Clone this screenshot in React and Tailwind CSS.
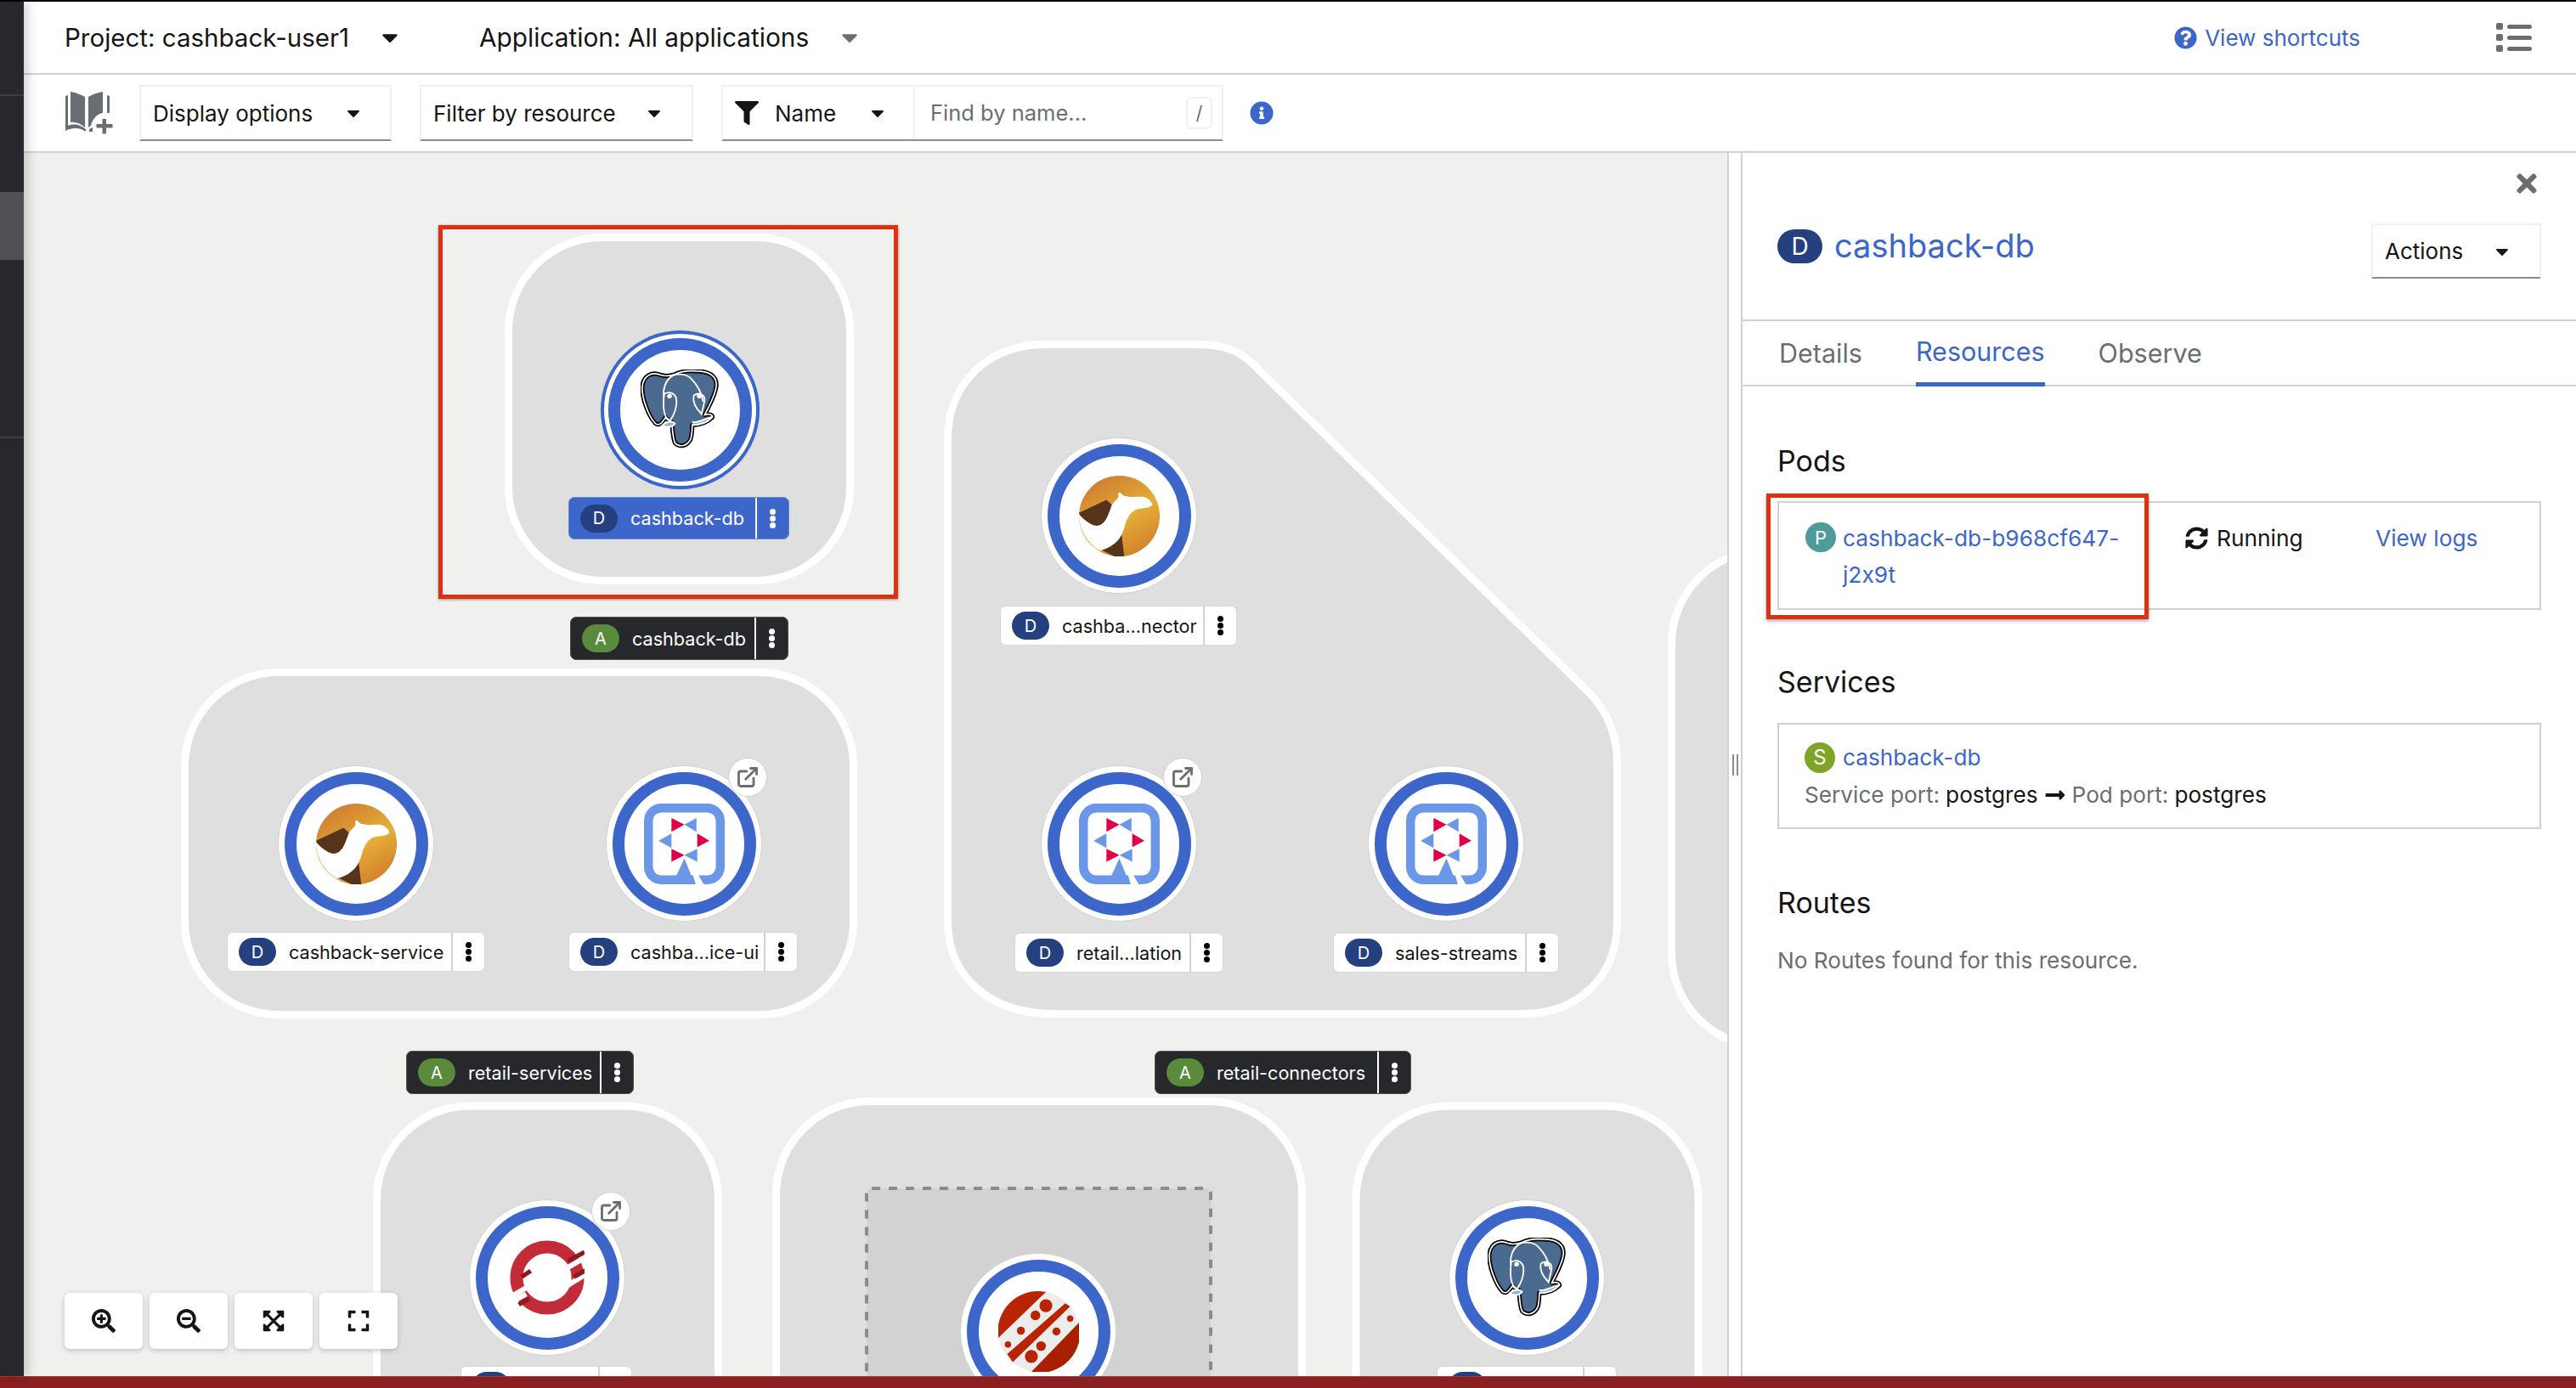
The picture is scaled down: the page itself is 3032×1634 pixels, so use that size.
import { ExternalLink } from "lucide-react";
import {
  FaCaretDown,
  FaExpand,
  FaExpandArrowsAlt,
  FaFilter,
  FaInfoCircle,
  FaLongArrowAltRight,
  FaQuestionCircle,
  FaSearchMinus,
  FaSearchPlus,
  FaSyncAlt,
  FaTimes,
} from "react-icons/fa";

// canvas origin in page coordinates, the data below is in page coordinates
const OX = 28;
const OY = 180;

const nodes = [
  { x: 800, y: 482, logo: "pg", selected: true },
  { x: 419, y: 993, logo: "camel" },
  { x: 805, y: 993, logo: "quarkus", link: true },
  { x: 1317, y: 607, logo: "camel" },
  { x: 1317, y: 993, logo: "quarkus", link: true },
  { x: 1702, y: 993, logo: "quarkus" },
  { x: 644, y: 1504, logo: "openshift", link: true },
  { x: 1222, y: 1567, logo: "amq" },
  { x: 1797, y: 1504, logo: "pg" },
];

const labels = [
  { x: 669, y: 585, w: 260, h: 50, text: "cashback-db", kind: "selected" },
  { x: 671, y: 726, w: 257, h: 51, text: "cashback-db", kind: "app" },
  { x: 267, y: 1097, w: 304, h: 47, text: "cashback-service" },
  { x: 669, y: 1097, w: 270, h: 47, text: "cashba...ice-ui" },
  { x: 1177, y: 713, w: 279, h: 47, text: "cashba...nector" },
  { x: 1194, y: 1098, w: 246, h: 47, text: "retail...lation" },
  { x: 1569, y: 1098, w: 266, h: 47, text: "sales-streams" },
  { x: 478, y: 1237, w: 268, h: 51, text: "retail-services", kind: "app" },
  { x: 1359, y: 1237, w: 302, h: 51, text: "retail-connectors", kind: "app" },
  { x: 542, y: 1608, w: 202, h: 47, text: "" },
  { x: 1691, y: 1608, w: 212, h: 47, text: "" },
];

function Elephant() {
  const outer =
    "M26 6 C14 1 3 7 2 22 C2 38 11 60 19 68 C24 72 28 66 32 60 L33 62 C35 64 38 65 40 66 C41 78 41 86 44 93 C50 99 60 97 64 88 C66 82 66 76 66 70 C74 70 84 68 92 60 C92 57 88 55 82 57 C88 44 96 32 97 19 C97 6 86 1 72 1 C60 0 52 1 44 5 C38 7 32 8 26 6 Z";
  return (
    <svg viewBox="0 0 100 100" className="w-[92px] h-[94px]">
      <path d={outer} fill="#4a6a90" stroke="#000" strokeWidth="5.5" strokeLinejoin="round" />
      <path d={outer} fill="none" stroke="#fff" strokeWidth="1.8" />
      <g fill="none" stroke="#fff" strokeWidth="2">
        <path d="M30 34 C28 24 32 14 38 9 C46 3 58 4 64 10 C72 18 78 28 80 40" />
        <path d="M30 30 C38 26 46 30 46 40 C46 50 42 58 38 64 C30 62 28 50 30 30" />
        <path d="M68 32 C74 28 82 30 82 38 L78 56 C72 50 66 42 68 32" />
        <path d="M28 70 C32 66 40 64 44 68 C42 72 34 74 28 70 Z" fill="#8fb0d0" />
        <path d="M66 66 C72 68 82 62 90 60 C88 66 76 70 66 70" fill="#8fb0d0" />
      </g>
      <circle cx="37" cy="33" r="3" fill="#fff" />
      <circle cx="75" cy="33" r="3" fill="#fff" />
    </svg>
  );
}

function Camel() {
  return (
    <svg viewBox="0 0 100 100" className="w-[95px] h-[95px]">
      <defs>
        <linearGradient id="camelFill" x1="0.2" y1="0" x2="0.8" y2="1">
          <stop offset="0" stopColor="#cf7a30" />
          <stop offset="0.55" stopColor="#e4ae38" />
          <stop offset="1" stopColor="#d17a2b" />
        </linearGradient>
      </defs>
      <circle cx="50" cy="50" r="50" fill="url(#camelFill)" />
      <path d="M0 46 L34 30 L52 46 L30 66 L6 60 Z" fill="#55341a" />
      <path d="M28 92 L52 66 L56 100 L44 100 Z" fill="#55341a" />
      <path
        d="M0 48 C6 54 14 62 22 62 C32 62 36 50 40 38 C42 32 48 30 49 26 C48 22 49 20 51 21 C53 22 54 25 56 25 C64 27 72 26 80 26 C86 28 90 32 91 36 C88 40 80 40 74 41 C66 43 62 48 58 58 C56 66 54 72 50 78 C44 86 36 90 26 93 C10 84 0 66 0 48 Z"
        fill="#fff"
      />
    </svg>
  );
}

function Quarkus() {
  return (
    <svg viewBox="0 0 100 100" className="w-[95px] h-[95px]">
      <rect x="5.5" y="5.5" width="89" height="89" rx="16" fill="none" stroke="#6a97e8" strokeWidth="11" />
      <polygon points="60,86 66,86 74,100 64,100" fill="#fff" />
      <polygon points="50,68 37,96 37,100 63,100" fill="#6a97e8" />
      <polygon points="34,18 34,35 50,26" fill="#df0046" />
      <polygon points="65,18 65,35 50,26" fill="#6a97e8" />
      <polygon points="34,37 34,55 18,46" fill="#6a97e8" />
      <polygon points="66,37 66,54 81,46" fill="#df0046" />
      <polygon points="34,56 34,72 50,64" fill="#df0046" />
      <polygon points="66,56 66,72 50,64" fill="#6a97e8" />
    </svg>
  );
}

function OpenShift() {
  return (
    <svg viewBox="-50 -50 100 100" className="w-[88px] h-[88px]">
      <circle r="41" fill="none" stroke="#c22b37" strokeWidth="17" />
      <g fill="none" strokeWidth="7">
        <path d="M20 -9 L56 -30" stroke="#fff" />
        <path d="M28 -22 L50 -34" stroke="#8e1a24" strokeWidth="6" />
        <path d="M28 10 L54 -6" stroke="#fff" />
        <path d="M36 -1 L52 -10" stroke="#8e1a24" strokeWidth="6" />
        <path d="M-20 9 L-56 30" stroke="#fff" />
        <path d="M-28 22 L-50 34" stroke="#fff" />
        <path d="M-34 -1 L-22 -9" stroke="#8e1a24" strokeWidth="6" />
        <path d="M-38 36 L-24 28" stroke="#8e1a24" strokeWidth="6" />
      </g>
    </svg>
  );
}

function Amq() {
  const dots = [
    [59, 18, 8],
    [46, 30, 6],
    [28, 49, 5],
    [12, 66, 4],
    [89, 34, 4],
    [72, 50, 5],
    [53, 68, 6],
    [41, 81, 8],
  ];
  return (
    <svg viewBox="0 0 100 100" className="w-[95px] h-[95px]">
      <circle cx="50" cy="50" r="50" fill="#ececec" />
      <path d="M59 1 A50 50 0 0 0 0 58 Z" fill="#b92500" />
      <path d="M100 39 A50 50 0 0 1 41 100 Z" fill="#a82000" />
      <polygon points="83,15 89,19 18,88 11,78" fill="#b92500" />
      {dots.map(([cx, cy, r]) => (
        <circle key={`${cx}-${cy}`} cx={cx} cy={cy} r={r} fill="#b92500" />
      ))}
    </svg>
  );
}

const logos = {
  pg: Elephant,
  camel: Camel,
  quarkus: Quarkus,
  openshift: OpenShift,
  amq: Amq,
};

function Node({ node }) {
  const Logo = logos[node.logo];
  return (
    <div
      className={
        node.selected
          ? "absolute flex size-[187px] items-center justify-center rounded-full border-[4px] border-[#3c66c9] bg-white"
          : "absolute flex size-[184px] items-center justify-center rounded-full border border-[#d2d2d2] bg-white"
      }
      style={{ left: node.x - OX - (node.selected ? 93.5 : 92), top: node.y - OY - (node.selected ? 93.5 : 92) }}
    >
      <div className="flex size-[169px] items-center justify-center rounded-full border-[14px] border-[#3c66c9] bg-white">
        <Logo />
      </div>
      {node.link && (
        <div className="absolute left-[143px] top-[-10px] flex size-[46px] items-center justify-center rounded-full border border-[#d2d2d2] bg-white text-[#6a6e73]">
          <ExternalLink size={28} strokeWidth={2.4} />
        </div>
      )}
    </div>
  );
}

function Kebab({ color }) {
  return (
    <div className="flex w-[37px] flex-col items-center gap-[1px]">
      <span className={`size-[7px] rounded-full ${color}`} />
      <span className={`size-[7px] rounded-full ${color}`} />
      <span className={`size-[7px] rounded-full ${color}`} />
    </div>
  );
}

function Label({ label }) {
  const box =
    label.kind === "app"
      ? "bg-[#26282c] text-white border-[#4f5155]"
      : label.kind === "selected"
        ? "bg-[#3c66c9] text-white border-[#6b8ad6]"
        : "bg-white text-[#151515] border-[#d8d8d8]";
  const badge = label.kind === "app" ? "bg-[#5a8a3c]" : "bg-[#24407f]";
  const line = label.kind === "app" || label.kind === "selected" ? "border-white" : "border-[#d2d2d2]";
  const dot = label.kind === "app" || label.kind === "selected" ? "bg-white" : "bg-black";
  return (
    <div
      className={`absolute flex items-center rounded-[7px] border-[1.5px] ${box}`}
      style={{ left: label.x - OX, top: label.y - OY, width: label.w, height: label.h }}
    >
      <span className={`ml-[13px] flex h-[33px] w-[44px] items-center justify-center rounded-full text-[20px] text-white ${badge}`}>
        {label.text && (label.kind === "app" ? "A" : "D")}
      </span>
      <span className="ml-[15px] mt-[2px] flex-1 whitespace-nowrap text-[21.6px] leading-none">{label.text}</span>
      <span className={`h-full border-l-[2px] ${line}`} />
      <Kebab color={dot} />
    </div>
  );
}

function Hulls() {
  return (
    <svg viewBox={`${OX} ${OY} 2005 1440`} className="absolute inset-0 h-[1440px] w-[2005px]">
      <g fill="#dfdfdf" stroke="#fff" strokeWidth="9">
        <rect x="598.5" y="279.5" width="402" height="404" rx="110" />
        <rect x="217.5" y="791.5" width="787" height="403" rx="110" />
        <path d="M1228 405.5 L1410 405.5 C1445 405.5 1464 415 1484 438 L1871 816 C1892 838 1903.5 866 1903.5 900 L1903.5 1084 C1903.5 1150 1858 1193.5 1792 1193.5 L1241 1193.5 C1165 1193.5 1115.5 1150 1115.5 1084 L1115.5 517 C1115.5 450 1165 405.5 1228 405.5 Z" />
        <rect x="1967.5" y="648" width="500" height="584" rx="110" />
        <rect x="443.5" y="1302" width="402" height="500" rx="110" />
        <rect x="913.5" y="1296.5" width="619" height="500" rx="110" />
        <rect x="1596" y="1302" width="403" height="500" rx="110" />
      </g>
      <rect x="1020" y="1399" width="405" height="400" rx="6" fill="#d2d2d2" stroke="#8a8d90" strokeWidth="4" strokeDasharray="10 10" />
    </svg>
  );
}

function BookIcon() {
  return (
    <svg viewBox="0 0 57 50" className="h-[50px] w-[57px]" fill="#6a6e73">
      <path d="M7 0 C14 1 20 4 24 6 L24 42 C18 37 12 35 7 36 Z" />
      <path d="M28 6 C33 3 39 1 45 0 L45 25 C38 26 33 32 31 40 L28 42 Z" />
      <path d="M1 5 L4 4 L4 40 C11 37 19 39 25 44 L25 47 C19 43 11 41 1 46 Z" />
      <path d="M50 4 L53 5 L53 25 L50 25 Z" />
      <path d="M29 47 L29 44 L33 42 L33 47 Z" />
      <path d="M44.5 32 h4.5 v6 h7.5 v4.5 h-7.5 v7 h-4.5 v-7 h-7 v-4.5 h7 Z" />
    </svg>
  );
}

function SelectBox({ label, width, gap }) {
  return (
    <div
      className="flex h-[66px] items-center border-[2px] border-[#f0f0f0] border-b-[#8a8d90] pl-[14px] text-[26px] text-[#151515]"
      style={{ width }}
    >
      <span className="whitespace-nowrap">{label}</span>
      <FaCaretDown size={24} className="text-[#151515]" style={{ marginLeft: gap }} />
    </div>
  );
}

function ZoomButton({ children }) {
  return (
    <button className="flex h-[66px] w-[92px] items-center justify-center rounded-[6px] bg-white text-[28px] text-[#151515] shadow-[0_2px_6px_rgba(0,0,0,0.2)]">
      {children}
    </button>
  );
}

export default function App() {
  return (
    <div className="flex h-[1634px] w-[3032px] flex-col overflow-hidden bg-white font-[Inter,sans-serif] text-[#151515]">
      <div className="h-[2px] bg-black" />
      <div className="flex min-h-0 flex-1">
        <aside className="relative z-10 flex w-[28px] flex-col bg-[#26282c] shadow-[5px_0_12px_rgba(0,0,0,0.18)]">
          <div className="h-[111px] border-b-[2px] border-[#3c3f42]" />
          <div className="mt-[113px] h-[80px] bg-[#4f5155]" />
          <div className="mt-[208px] h-[2px] bg-[#3c3f42]" />
        </aside>

        <div className="flex min-w-0 flex-1 flex-col">
          <header className="flex h-[86px] shrink-0 items-center border-b-[2px] border-[#d2d2d2] pl-[48px] pr-[52px]">
            <div className="flex w-[488px] items-center text-[29.5px]">
              <span className="whitespace-nowrap">Project: cashback-user1</span>
              <FaCaretDown size={30} className="ml-[33px]" />
            </div>
            <div className="flex items-center text-[29.8px]">
              <span className="whitespace-nowrap">Application: All applications</span>
              <FaCaretDown size={30} className="ml-[33px] text-[#6a6e73]" />
            </div>
            <div className="ml-auto flex items-center text-[26px] text-[#3c66c9]">
              <FaQuestionCircle size={27} />
              <span className="ml-[9px]">View shortcuts</span>
            </div>
            <div className="ml-[160px] flex h-[34px] w-[42px] flex-col justify-between">
              <div className="flex items-center gap-[5px]">
                <span className="size-[8px] rounded-[2px] bg-[#6a6e73]" />
                <span className="h-[5px] flex-1 rounded-full bg-[#6a6e73]" />
              </div>
              <div className="flex items-center gap-[5px]">
                <span className="size-[8px] rounded-[2px] bg-[#6a6e73]" />
                <span className="h-[5px] flex-1 rounded-full bg-[#6a6e73]" />
              </div>
              <div className="flex items-center gap-[5px]">
                <span className="size-[8px] rounded-[2px] bg-[#6a6e73]" />
                <span className="h-[5px] flex-1 rounded-full bg-[#6a6e73]" />
              </div>
            </div>
          </header>

          <div className="flex h-[92px] shrink-0 items-center border-b-[2px] border-[#d2d2d2] pl-[48px]">
            <BookIcon />
            <div className="ml-[31px]">
              <SelectBox label="Display options" width={297} gap={36} />
            </div>
            <div className="ml-[33px]">
              <SelectBox label="Filter by resource" width={322} gap={33} />
            </div>
            <div className="ml-[33px] flex h-[66px] w-[591px] items-center border-[2px] border-[#f0f0f0] border-b-[#8a8d90] text-[26px]">
              <div className="flex h-full w-[226px] items-center border-r-[2px] border-[#f0f0f0] pl-[14px]">
                <FaFilter size={28} />
                <span className="ml-[19px]">Name</span>
                <FaCaretDown size={24} className="ml-[37px]" />
              </div>
              <span className="ml-[18px] flex-1 text-[#6a6e73] text-[25.5px]">Find by name...</span>
              <span className="mr-[11px] flex h-[38px] w-[31px] items-center justify-center rounded-[6px] border-[2px] border-[#f0f0f0] text-[22px] text-[#6a6e73]">
                /
              </span>
            </div>
            <FaInfoCircle size={28} className="ml-[31px] text-[#3c66c9]" />
          </div>

          <main className="flex min-h-0 flex-1">
            <div className="relative w-[2005px] shrink-0 overflow-hidden bg-[#f0f0ee]">
              <Hulls />
              {nodes.map((node) => (
                <Node key={`${node.x}-${node.y}`} node={node} />
              ))}
              {labels.map((label) => (
                <Label key={`${label.x}-${label.y}`} label={label} />
              ))}

              {/* annotation around the selected node */}
              <div className="absolute left-[488px] top-[85px] h-[440px] w-[541px] border-[5px] border-[#e03010] shadow-[0_1px_3px_rgba(0,0,0,0.4)]" />

              <div className="absolute bottom-[32px] left-[48px] flex gap-[8px]">
                <ZoomButton>
                  <FaSearchPlus />
                </ZoomButton>
                <ZoomButton>
                  <FaSearchMinus />
                </ZoomButton>
                <ZoomButton>
                  <FaExpandArrowsAlt />
                </ZoomButton>
                <ZoomButton>
                  <FaExpand />
                </ZoomButton>
              </div>
            </div>

            <div className="flex w-[18px] shrink-0 items-center justify-center border-l-[2px] border-r-[2px] border-[#d2d2d2] bg-white">
              <div className="flex h-[25px] gap-[3px]">
                <span className="w-[2px] bg-[#8a8d90]" />
                <span className="w-[2px] bg-[#8a8d90]" />
              </div>
            </div>

            <section className="relative min-w-0 flex-1 bg-white">
              <div className="h-[198px] border-b-[2px] border-[#d2d2d2] px-[41px] pt-[19px]">
                <div className="flex justify-end">
                  <FaTimes size={34} className="text-[#6a6e73]" />
                </div>
                <div className="mt-[30px] flex items-start justify-between">
                  <div className="mt-[5px] flex items-center">
                    <span className="mt-[2px] flex h-[40px] w-[53px] items-center justify-center rounded-full bg-[#24407f] text-[28px] text-white">
                      D
                    </span>
                    <span className="ml-[14px] text-[38px] leading-[40px] text-[#3c66c9]">cashback-db</span>
                  </div>
                  <div className="flex h-[65px] w-[200px] items-center border-[2px] border-[#f0f0f0] border-b-[#8a8d90] pl-[14px] text-[26px]">
                    Actions
                    <FaCaretDown size={24} className="ml-[34px]" />
                  </div>
                </div>
              </div>

              <nav className="flex h-[77px] gap-[63px] border-b-[2px] border-[#d2d2d2] pl-[43px] pr-[41px] text-[30.5px] text-[#6a6e73]">
                <span className="flex items-center">Details</span>
                <span className="-mb-[2px] flex items-center border-b-[5px] border-[#3c66c9] text-[#3c66c9]">Resources</span>
                <span className="flex items-center">Observe</span>
              </nav>

              <div className="px-[41px] pt-[66px]">
                <h2 className="mb-[25px] h-[44px] text-[34px] leading-[44px]">Pods</h2>
                <div className="flex h-[128px] border-[2px] border-[#d2d2d2] pt-[20px] text-[26.3px] leading-[43px]">
                  <div className="flex w-[478px] items-start pl-[31px]">
                    <span className="mt-[3px] flex h-[35px] w-[36px] shrink-0 items-center justify-center rounded-full bg-[#4f9a9a] text-[22px] leading-none text-white">
                      P
                    </span>
                    <span className="ml-[8px] text-[#3c66c9] [font-feature-settings:'calt'_0]">
                      cashback-db-b968cf647-
                      <br />
                      j2x9t
                    </span>
                  </div>
                  <div className="flex h-[43px] w-[225px] items-center">
                    <FaSyncAlt size={27} />
                    <span className="ml-[10px]">Running</span>
                  </div>
                  <span className="-ml-[1px] text-[#3c66c9]">View logs</span>
                </div>

                <h2 className="mb-[26px] mt-[63px] h-[44px] text-[34px] leading-[44px]">Services</h2>
                <div className="h-[125px] border-[2px] border-[#d2d2d2] pl-[30px] pt-[17px] text-[26.2px] leading-[44px]">
                  <div className="flex items-center">
                    <span className="flex h-[36px] w-[36px] shrink-0 items-center justify-center rounded-full bg-[#7ea52a] text-[24px] leading-none text-white">
                      S
                    </span>
                    <span className="ml-[9px] text-[#3c66c9]">cashback-db</span>
                  </div>
                  <div className="flex items-center whitespace-nowrap">
                    <span className="text-[#6a6e73]">Service port:</span>
                    <span className="ml-[7px]">postgres</span>
                    <FaLongArrowAltRight size={26} className="mx-[7px]" />
                    <span className="text-[#6a6e73]">Pod port:</span>
                    <span className="ml-[7px]">postgres</span>
                  </div>
                </div>

                <h2 className="mt-[65px] h-[44px] text-[34px] leading-[44px]">Routes</h2>
                <p className="mt-[29px] text-[26.2px] leading-[34px] text-[#6a6e73]">No Routes found for this resource.</p>
              </div>

              {/* annotation around the pod row */}
              <div className="absolute left-[28px] top-[401px] h-[148px] w-[450px] border-[5px] border-[#e03010] shadow-[0_2px_4px_rgba(0,0,0,0.35)]" />
            </section>
          </main>
        </div>
      </div>
      <div className="h-[14px] shrink-0 border-t border-[#a33a3a] bg-[#8b2020]" />
    </div>
  );
}
